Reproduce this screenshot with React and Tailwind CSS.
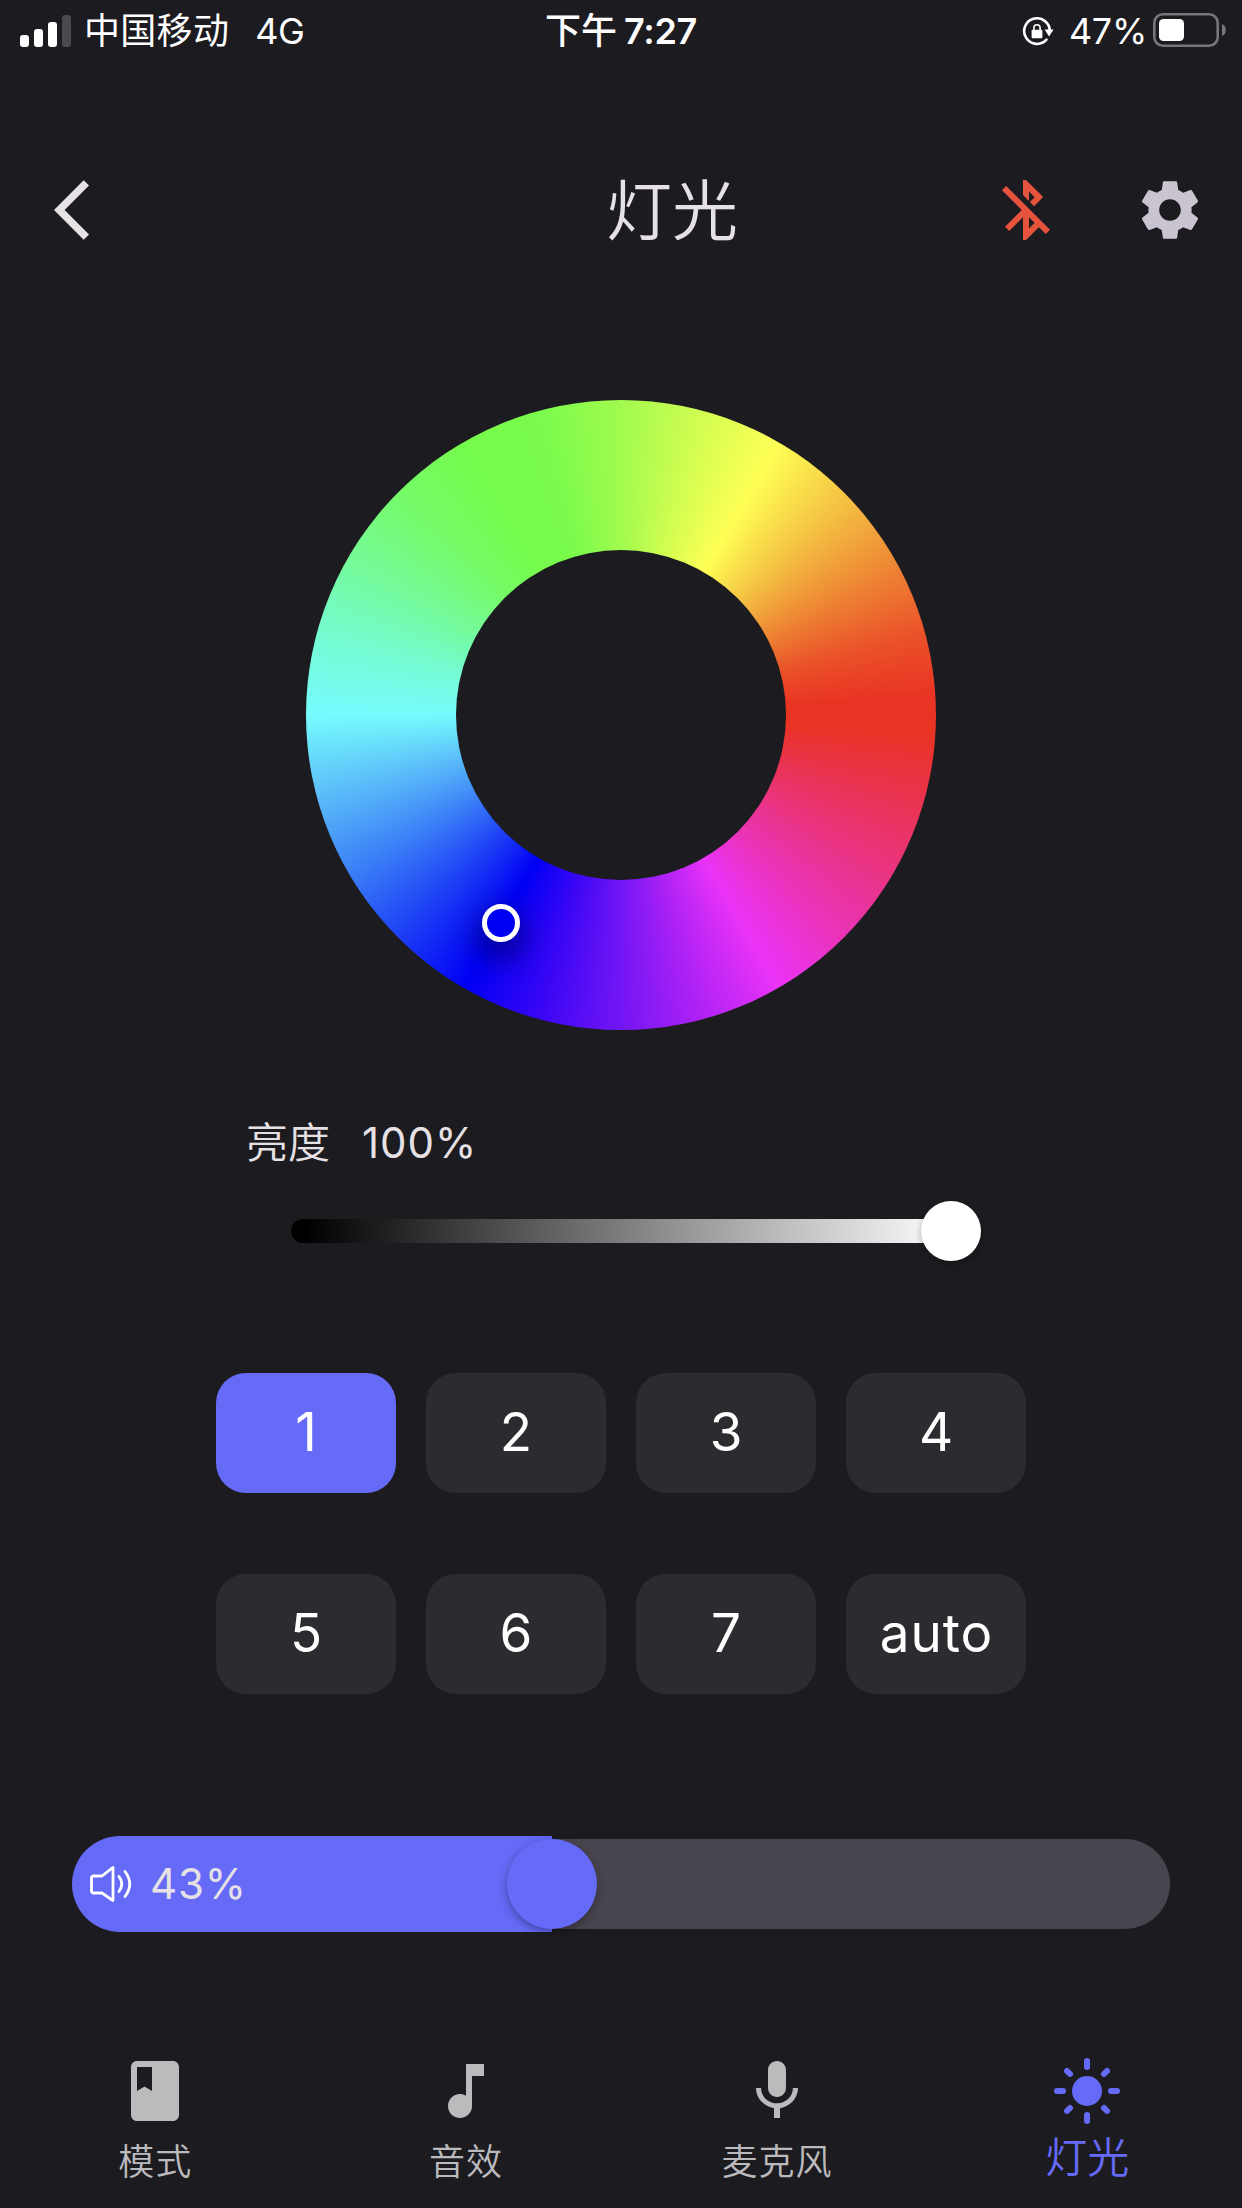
const presets = ["1", "2", "3", "4", "5", "6", "7", "auto"];

function Glyph({ d, className }) {
  return (
    <svg viewBox="0 0 24 24" fill="currentColor" className={className}>
      <path d={d} />
    </svg>
  );
}

const icons = {
  back: "M11.67 3.87L9.9 2.1 0 12l9.9 9.9 1.77-1.77L3.54 12z",
  bluetoothOff:
    "M13 5.83l1.88 1.88-1.6 1.6 1.41 1.41 3.02-3.02L12 2h-1v5.03l2 2v-3.2zM5.41 4L4 5.41 10.59 12 5 17.59 6.41 19 11 14.41V22h1l4.29-4.29 2.3 2.29L20 18.59 5.41 4zM13 18.17v-3.76l1.88 1.88L13 18.17z",
  settings:
    "M19.14 12.94c.04-.3.06-.61.06-.94 0-.32-.02-.64-.07-.94l2.03-1.58c.18-.14.23-.41.12-.61l-1.92-3.32c-.12-.22-.37-.29-.59-.22l-2.39.96c-.5-.38-1.03-.7-1.62-.94L14.4 2.81c-.04-.24-.24-.41-.48-.41h-3.84c-.24 0-.43.17-.47.41L9.25 5.35c-.59.24-1.13.57-1.62.94L5.24 5.33c-.22-.08-.47 0-.59.22L2.74 8.87c-.12.21-.08.47.12.61l2.03 1.58c-.05.3-.09.63-.09.94s.02.64.07.94l-2.03 1.58c-.18.14-.23.41-.12.61l1.92 3.32c.12.22.37.29.59.22l2.39-.96c.5.38 1.03.7 1.62.94l.36 2.54c.05.24.24.41.48.41h3.84c.24 0 .44-.17.47-.41l.36-2.54c.59-.24 1.13-.56 1.62-.94l2.39.96c.22.08.47 0 .59-.22l1.92-3.32c.12-.22.07-.47-.12-.61l-2.01-1.58zM12 15.6c-1.98 0-3.6-1.62-3.6-3.6s1.62-3.6 3.6-3.6 3.6 1.62 3.6 3.6-1.62 3.6-3.6 3.6z",
  book: "M18 2H6c-1.1 0-2 .9-2 2v16c0 1.1.9 2 2 2h12c1.1 0 2-.9 2-2V4c0-1.1-.9-2-2-2zM6 4h5v8l-2.5-1.5L6 12V4z",
  note: "M12 3v10.55c-.59-.34-1.27-.55-2-.55-2.21 0-4 1.79-4 4s1.79 4 4 4 4-1.79 4-4V7h4V3h-6z",
  mic: "M12 14c1.66 0 2.99-1.34 2.99-3L15 5c0-1.66-1.34-3-3-3S9 3.34 9 5v6c0 1.66 1.34 3 3 3zm5.3-3c0 3-2.54 5.1-5.3 5.1S6.7 14 6.7 11H5c0 3.41 2.72 6.23 6 6.72V21h2v-3.28c3.28-.48 6-3.3 6-6.72h-1.7z",
};

function StatusBar() {
  return (
    <div className="grid h-[62px] grid-cols-3 items-center text-[36px] leading-[62px] text-white">
      <div className="flex h-full items-center pl-5">
        <div className="mb-px flex h-8 items-end gap-[5px]">
          <i className="h-3 w-[9px] rounded-[3px] bg-white" />
          <i className="h-[18px] w-[9px] rounded-[3px] bg-white" />
          <i className="h-[25px] w-[9px] rounded-[3px] bg-white" />
          <i className="h-8 w-[9px] rounded-[3px] bg-[#4a4a4e]" />
        </div>
        <span className="ml-[13px] tracking-[0.3px]">中国移动</span>
        <span className="ml-[26px] tracking-[-0.5px]">4G</span>
      </div>
      <div className="flex h-full items-center justify-center font-semibold">
        <span className="font-medium">下午</span>
        <span className="ml-[7px] text-[36px] tracking-[-0.3px]">7:27</span>
      </div>
      <div className="flex h-full items-center justify-end pr-[15px]">
        <svg viewBox="0 0 34 30" className="mt-px h-[30px] w-[34px]">
          <path d="M24.5 22.7A12.8 12.8 0 1 1 27.8 14" fill="none" stroke="#fff" strokeWidth="2.6" strokeLinecap="round" />
          <path d="M22.6 12.6H31.6L27 19.4Z" fill="#fff" />
          <rect x="9.6" y="12.7" width="10.8" height="8.6" rx="1.2" fill="#fff" />
          <path d="M11.9 13V10.8a3.1 3.1 0 0 1 6.2 0V13" fill="none" stroke="#fff" strokeWidth="1.6" />
        </svg>
        <span className="ml-[13px] tracking-[-0.3px]">47%</span>
        <svg viewBox="0 0 74 34" className="mb-[2px] ml-[6px] h-[34px] w-[74px]">
          <rect x="1.3" y="1.3" width="63.4" height="31.4" rx="8.5" fill="none" stroke="#77777a" strokeWidth="2.6" />
          <rect x="6" y="6" width="25" height="22" rx="4.5" fill="#fff" />
          <path d="M69 11c5 1.5 5 10.500 0 12Z" fill="#77777a" />
        </svg>
      </div>
    </div>
  );
}

function Header() {
  return (
    <header className="mt-28 flex h-[72px] items-center justify-between pr-9 pl-[54px]">
      <Glyph d={icons.back} className="mr-[144px] size-[72px] text-[#e6e1e5]" />
      <h1 className="mt-[2px] ml-[84px] text-[66px] leading-[72px] font-[350] text-[#e6e1e5]">灯光</h1>
      <div className="flex gap-[72px]">
        <Glyph d={icons.bluetoothOff} className="size-[72px] text-[#e5533d]" />
        <Glyph d={icons.settings} className="size-[72px] text-[#cac4d0]" />
      </div>
    </header>
  );
}

function ColorWheel() {
  return (
    <div className="relative mx-auto mt-[154px] flex size-[630px] items-center justify-center rounded-full bg-[conic-gradient(#a1fb4e_0deg,#d2fd51_15deg,#ffff55_30deg,#f5c644_45deg,#ee8b35_60deg,#ea5129_75deg,#e93323_87deg,#e93323_93deg,#e9334b_105deg,#ea3480_120deg,#ea33b8_135deg,#ea33f7_150deg,#af22f5_165deg,#7316f5_180deg,#3a06f5_195deg,#0000f5_210deg,#1d3ff5_225deg,#3b80f7_240deg,#5bbcf9_255deg,#75fbfd_270deg,#75fbd0_285deg,#75fb98_300deg,#75fb68_315deg,#75fb4c_330deg,#7bfb4c_345deg,#a1fb4e_360deg)]">
      <div className="size-[330px] rounded-full bg-[#1c1b1f]" />
      <div className="absolute top-[504px] left-[176px] size-[38px] rounded-full border-[5px] border-white bg-[#0000f5] shadow-[0_12px_26px_8px_rgba(0,0,0,0.32)]" />
    </div>
  );
}

function Brightness() {
  return (
    <section className="mt-[86px] px-[246px] text-[#e6e1e5]">
      <div className="flex h-[54px] items-center gap-[32px] text-[42px] leading-[54px]">
        <span className="font-[350]">亮度</span>
        <span className="tracking-[1px]">100%</span>
      </div>
      <div className="relative mt-[31px] ml-[45px] flex h-[60px] w-[690px] items-center">
        <div className="h-6 w-[660px] rounded-l-full bg-[linear-gradient(to_right,#000_0%,#000_2%,#fff_100%)]" />
        <div className="absolute right-0 size-[60px] rounded-full bg-white shadow-[0_2px_6px_rgba(0,0,0,0.3)]" />
      </div>
    </section>
  );
}

function Presets() {
  return (
    <div className="mx-auto mt-[112px] grid w-[810px] grid-cols-4 gap-x-[30px] gap-y-[81px]">
      {presets.map((label, i) => (
        <button
          key={label}
          className={
            i === 0
              ? "h-[120px] rounded-[30px] bg-[#656af7] pl-px text-[53px] tracking-[1px] text-white"
              : "h-[120px] rounded-[30px] bg-[#2c2b30] pl-px text-[53px] tracking-[1px] text-white"
          }
        >
          {label}
        </button>
      ))}
    </div>
  );
}

function Volume() {
  return (
    <div className="relative mx-[72px] mt-[142px] flex h-24 items-center">
      <div className="flex h-24 w-[480px] shrink-0 items-center rounded-l-full bg-[#656af7] pl-[17px]">
        <svg viewBox="0 0 44 38" className="h-[38px] w-11 text-white" fill="none" stroke="currentColor" strokeWidth="2.8" strokeLinecap="round" strokeLinejoin="round">
          <path d="M24 2.400V35.600L13 28H4.500A2 2 0 0 1 2.500 26V13A2 2 0 0 1 4.500 11H13Z" />
          <path d="M30 11.500Q35.500 19 30 26.500M36 6.500Q45.500 19 36 31.500" />
        </svg>
        <span className="ml-[17px] text-[42px] leading-[54px] tracking-[0.8px] text-[#e6e1e5]">43%</span>
      </div>
      <div className="h-[90px] grow rounded-r-full bg-[#49454f]" />
      <div className="absolute left-[435px] size-[90px] rounded-full bg-[#656af7] shadow-[0_3px_8px_rgba(0,0,0,0.35)]" />
    </div>
  );
}

function Sun() {
  return (
    <svg viewBox="-36 -36 72 72" className="size-[72px]">
      <circle r="15" fill="currentColor" />
      <path
        d="M0-30V-24M0 24V30M-30 0H-24M24 0H30M-20-20L-17-17M20-20L17-17M-20 20L-17 17M20 20L17 17"
        stroke="currentColor"
        strokeWidth="6"
        strokeLinecap="round"
      />
    </svg>
  );
}

function BottomNav() {
  return (
    <nav className="mt-[123px] grid w-[1242.6px] grid-cols-4 text-[36px] leading-[48px] font-[350] text-[#bbbabc]">
      <div className="flex flex-col items-center">
        <Glyph d={icons.book} className="size-[72px]" />
        <span className="mt-[11px] tracking-[1px]">模式</span>
      </div>
      <div className="flex flex-col items-center">
        <Glyph d={icons.note} className="size-[72px]" />
        <span className="mt-[11px] tracking-[1px]">音效</span>
      </div>
      <div className="flex flex-col items-center">
        <Glyph d={icons.mic} className="size-[72px]" />
        <span className="mt-[11px] pl-px tracking-[1px]">麦克风</span>
      </div>
      <div className="flex flex-col items-center text-[#656af7]">
        <Sun />
        <span className="mt-[7px] text-[42px]">灯光</span>
      </div>
    </nav>
  );
}

export default function App() {
  return (
    <main className="h-[2208px] w-[1242px] overflow-hidden bg-[#1c1b1f] font-['Inter','Noto_Sans_CJK_SC',sans-serif]">
      <StatusBar />
      <Header />
      <ColorWheel />
      <Brightness />
      <Presets />
      <Volume />
      <BottomNav />
    </main>
  );
}
